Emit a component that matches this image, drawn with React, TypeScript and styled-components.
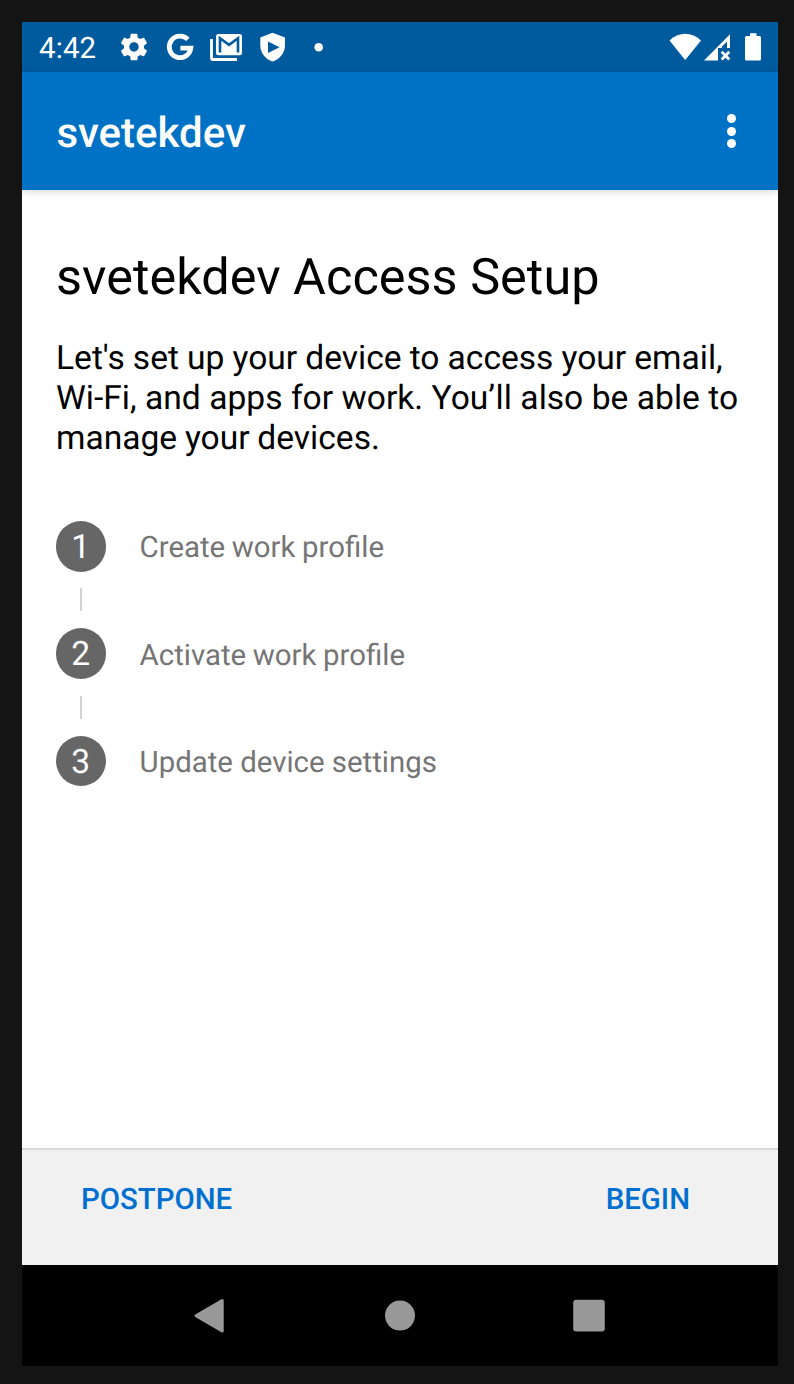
import React from "react";
import styled, { createGlobalStyle } from "styled-components";

const Global = createGlobalStyle`
  * { box-sizing: border-box; }
  body {
    margin: 0;
    background: #141414;
    font-family: Roboto, "Liberation Sans", sans-serif;
    text-rendering: geometricPrecision;
  }
`;

const Bezel = styled.div`
  width: 794px;
  height: 1384px;
  padding: 22px 16px 18px 22px;
  background: #141414;
`;

const Screen = styled.div`
  height: 1344px;
  display: flex;
  flex-direction: column;
  background: #fff;
  overflow: hidden;
`;

const StatusBar = styled.div`
  height: 50px;
  flex: none;
  display: flex;
  align-items: center;
  padding: 0 13px 0 17px;
  background: #005a9e;
  color: #fff;
`;

const Clock = styled.span`
  width: 79px;
  font-size: 29.4px;
  line-height: 34px;
  padding-top: 3px;
  letter-spacing: 0.15px;
`;

const Notifications = styled.div`
  display: flex;
  gap: 14px;
  flex: 1;
`;

const Indicators = styled.div`
  display: flex;
`;

const StatusIcon = styled.svg`
  display: block;
  height: 32px;
  fill: #fff;
`;

const AppBar = styled.header`
  height: 118px;
  flex: none;
  display: flex;
  align-items: center;
  justify-content: space-between;
  padding: 0 42px 0 34.4px;
  background: #0072c6;
  color: #fff;
  box-shadow: 0 2px 7px rgba(0, 0, 0, 0.14);
`;

const AppTitle = styled.h1`
  margin: 0;
  padding-top: 6px;
  font-size: 42px;
  font-weight: 500;
  line-height: 50px;
`;

const MenuButton = styled.button`
  border: 0;
  padding: 0;
  background: none;
  display: flex;
  flex-direction: column;
  gap: 3.6px;
`;

const MenuDot = styled.span`
  width: 9px;
  height: 9px;
  border-radius: 50%;
  background: #fff;
`;

const Content = styled.main`
  flex: 1;
  padding: 58px 34px 0;
`;

const Heading = styled.h2`
  margin: 0;
  font-size: 50.4px;
  font-weight: 400;
  line-height: 60px;
  color: #000;
  letter-spacing: 0.03px;
`;

const Intro = styled.p`
  margin: 31px 0 0;
  font-size: 33.6px;
  line-height: 40px;
  color: #000;
  white-space: nowrap;
`;

const IntroLine = styled.span<{ $gap: number }>`
  display: block;
  word-spacing: ${({ $gap }) => $gap}px;
`;

const Steps = styled.ol`
  list-style: none;
  margin: 62.2px 0 0 -0.4px;
  padding: 0;
`;

const Step = styled.li`
  display: grid;
  grid-template-columns: 50.4px 1fr;
  column-gap: 33.6px;
  align-items: center;
  height: 50.4px;
`;

const StepNumber = styled.span`
  width: 50.4px;
  height: 50.4px;
  border-radius: 50%;
  background: #666;
  color: #fff;
  font-size: 33.6px;
  line-height: 54px;
  text-align: center;
`;

const StepLabel = styled.span<{ $gap: number }>`
  font-size: 29.4px;
  line-height: 36px;
  padding-top: 4px;
  color: #757575;
  word-spacing: ${({ $gap }) => $gap}px;
`;

const Connector = styled.li`
  width: 2px;
  height: 23px;
  margin: 16.9px 0 16.9px 24.4px;
  background: #d2d2d2;
`;

const ActionBar = styled.footer`
  height: 117px;
  flex: none;
  display: flex;
  align-items: flex-start;
  justify-content: space-between;
  padding: 32px 88px 0 59px;
  border-top: 2px solid #d8d8d8;
  background: #f1f1f1;
`;

const ActionButton = styled.button`
  border: 0;
  padding: 0;
  background: none;
  color: #0070d0;
  font-family: inherit;
  font-size: 29.4px;
  font-weight: 500;
  line-height: 36px;
  text-rendering: inherit;
`;

const NavBar = styled.nav`
  height: 101px;
  flex: none;
  display: flex;
  align-items: center;
  justify-content: center;
  gap: 149px;
  padding-bottom: 1px;
  background: #000;
`;

const NavIcon = styled.svg`
  width: 40px;
  height: 40px;
  fill: #999;
  stroke: #999;
`;

const steps = [
  { label: "Create work profile", gap: -0.7 },
  { label: "Activate work profile", gap: -0.7 },
  { label: "Update device settings", gap: 0 },
];

export default function App() {
  return (
    <Bezel>
      <Global />
      <Screen>
        <StatusBar>
          <Clock>4:42</Clock>
          <Notifications>
            <StatusIcon width="32" viewBox="0 0 24 24">
              <path d="M19.43 12.98c.04-.32.07-.64.07-.98s-.03-.66-.07-.98l2.11-1.65c.19-.15.24-.42.12-.64l-2-3.46c-.12-.22-.39-.3-.61-.22l-2.49 1c-.52-.4-1.08-.73-1.69-.98l-.38-2.65C14.46 2.18 14.25 2 14 2h-4c-.25 0-.46.18-.49.42l-.38 2.65c-.61.25-1.17.59-1.69.98l-2.49-1c-.23-.09-.49 0-.61.22l-2 3.46c-.13.22-.07.49.12.64l2.11 1.65c-.04.32-.07.65-.07.98s.03.66.07.98l-2.11 1.65c-.19.15-.24.42-.12.64l2 3.46c.12.22.39.3.61.22l2.49-1c.52.4 1.08.73 1.69.98l.38 2.65c.03.24.24.42.49.42h4c.25 0 .46-.18.49-.42l.38-2.65c.61-.25 1.17-.59 1.69-.98l2.49 1c.23.09.49 0 .61-.22l2-3.46c.12-.22.07-.49-.12-.64l-2.11-1.65zM12 15.5c-1.93 0-3.5-1.57-3.5-3.5s1.57-3.5 3.5-3.5 3.5 1.57 3.5 3.5-1.57 3.5-3.5 3.5z" />
            </StatusIcon>
            <StatusIcon width="32" viewBox="0 0 32 32">
              <path d="M23.9 8.4 A10.8 10.8 0 1 0 26.8 17.2 H16.4" fill="none" stroke="#fff" strokeWidth="4.8" />
            </StatusIcon>
            <StatusIcon width="32" viewBox="0 0 32 32">
              <path d="M1.5 8V27Q1.5 28.5 3 28.5H27" fill="none" stroke="#fff" strokeWidth="2.8" />
              <rect x="6" y="3" width="26" height="21.2" rx="2.5" />
              <path d="M10 21.5V7.2L19 13.8L28 7.2V21.5" fill="none" stroke="#005a9e" strokeWidth="2.6" />
            </StatusIcon>
            <StatusIcon width="32" viewBox="0 0 32 32">
              <path fillRule="evenodd" d="M16.5 1.7L29 6.4V14.5C29 22 23.5 28.3 16.6 30.6C9.7 28.3 4.3 22 4.3 14.5V6.4ZM12 10.6V22L23.5 16.3Z" />
            </StatusIcon>
            <StatusIcon width="32" viewBox="0 0 32 32">
              <circle cx="16.7" cy="16.2" r="4.3" />
            </StatusIcon>
          </Notifications>
          <Indicators>
            <StatusIcon width="35" viewBox="665 31 35 32" overflow="visible">
              <path d="M669.5 40.5C678.5 31.6 692 31.6 701 40.5L685.2 60Z" />
            </StatusIcon>
            <StatusIcon width="37" viewBox="700 31 37 32">
              <path d="M704 60.5L730 34.2V48H727V41.5L722 46.5L722 48H718V60.5Z" />
              <path d="M721.7 51.8L729.3 59.4M729.3 51.8L721.7 59.4" stroke="#fff" strokeWidth="2.8" />
            </StatusIcon>
            <StatusIcon width="28" viewBox="737 31 28 32">
              <path d="M747 36H750V33.3H756.5V36H759.5Q761 36 761 37.5V59Q761 60.5 759.5 60.5H746.5Q745 60.5 745 59V37.5Q745 36 746.5 36Z" />
            </StatusIcon>
          </Indicators>
        </StatusBar>
        <AppBar>
          <AppTitle>svetekdev</AppTitle>
          <MenuButton aria-label="More options">
            <MenuDot />
            <MenuDot />
            <MenuDot />
          </MenuButton>
        </AppBar>
        <Content>
          <Heading>svetekdev Access Setup</Heading>
          <Intro>
            <IntroLine $gap={-0.25}>Let's set up your device to access your email,</IntroLine>
            <IntroLine $gap={0.1}>Wi-Fi, and apps for work. You’ll also be able to</IntroLine>
            <IntroLine $gap={-0.6}>manage your devices.</IntroLine>
          </Intro>
          <Steps>
            {steps.map(({ label, gap }, i) => (
              <React.Fragment key={label}>
                {i > 0 && <Connector aria-hidden="true" />}
                <Step>
                  <StepNumber>{i + 1}</StepNumber>
                  <StepLabel $gap={gap}>{label}</StepLabel>
                </Step>
              </React.Fragment>
            ))}
          </Steps>
        </Content>
        <ActionBar>
          <ActionButton>POSTPONE</ActionButton>
          <ActionButton>BEGIN</ActionButton>
        </ActionBar>
        <NavBar>
          <NavIcon viewBox="0 0 40 40">
            <path d="M5 20.7L31.2 5.5V35.9Z" strokeWidth="3" strokeLinejoin="round" />
          </NavIcon>
          <NavIcon viewBox="0 0 40 40">
            <circle cx="20" cy="20.6" r="15" stroke="none" />
          </NavIcon>
          <NavIcon viewBox="0 0 40 40">
            <rect x="4.2" y="4.8" width="31.6" height="31.6" rx="3" stroke="none" />
          </NavIcon>
        </NavBar>
      </Screen>
    </Bezel>
  );
}
